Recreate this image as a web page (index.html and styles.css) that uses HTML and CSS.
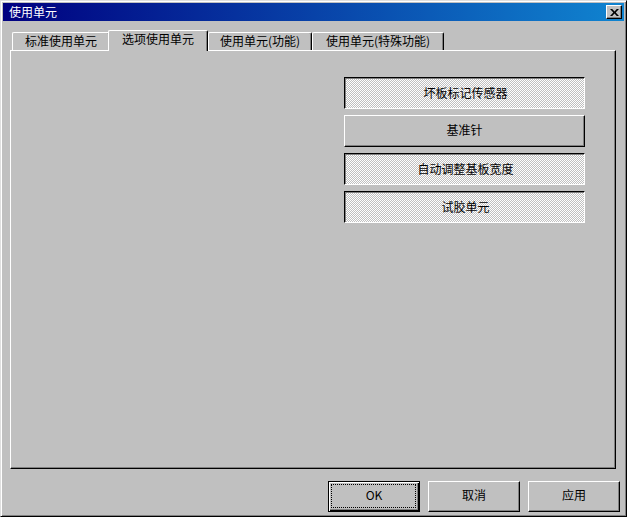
FILE: index.html
```html
<!DOCTYPE html>
<html>
<head>
<meta charset="utf-8"/>
<title>使用单元</title>
<link rel="stylesheet" href="styles.css">
</head>
<body>
<div class="window">
	<div class="titlebar">
		<span class="title">使用单元</span>
		<button class="close-btn" type="button">
			<svg width="9" height="7" viewBox="0 0 9 7"><path d="M0 0h2.2l2.3 2.4 2.3-2.4h2.2l-3.3 3.5 3.3 3.5h-2.2l-2.3-2.4-2.3 2.4h-2.2l3.3-3.5z" fill="#000"/></svg>
		</button>
	</div>
	<div class="tabs">
		<div class="tab tab-std">标准使用单元</div>
		<div class="tab tab-opt is-active">选项使用单元</div>
		<div class="tab tab-func">使用单元(功能)</div>
		<div class="tab tab-special">使用单元(特殊功能)</div>
	</div>
	<div class="panel">
		<div class="option-list">
			<button class="opt is-on" type="button">坏板标记传感器</button>
			<button class="opt" type="button">基准针</button>
			<button class="opt is-on" type="button">自动调整基板宽度</button>
			<button class="opt is-on" type="button">试胶单元</button>
		</div>
	</div>
	<div class="actions">
		<button class="btn btn-default" type="button">OK</button>
		<button class="btn" type="button">取消</button>
		<button class="btn" type="button">应用</button>
	</div>
</div>
</body>
</html>
```

FILE: styles.css
```css
body {
	margin: 0;
	background-color: #c0c0c0;
	font-family: "Noto Sans CJK SC", sans-serif;
	font-size: 12px;
	line-height: 14px;
}
button {
	font: inherit;
	color: #000;
	margin: 0;
	padding: 0;
}
.window {
	width: 627px;
	height: 517px;
	box-sizing: border-box;
	padding: 2px;
	border: 1px solid;
	border-color: #dfdfdf #000 #000 #dfdfdf;
	box-shadow: inset 1px 1px #fff, inset -1px -1px #808080;
	background-color: #c0c0c0;
	display: flex;
	flex-direction: column;
}
.titlebar {
	height: 18px;
	display: flex;
	align-items: center;
	justify-content: space-between;
	background: linear-gradient(to right, #000080, #1084d0);
	color: #fff;
	padding: 0 2px 0 6px;
}
.close-btn {
	width: 16px;
	height: 14px;
	box-sizing: border-box;
	border: 1px solid;
	border-color: #fff #000 #000 #fff;
	box-shadow: inset -1px -1px #808080;
	background-color: #c0c0c0;
	display: flex;
	align-items: center;
	justify-content: center;
}
.tabs {
	display: flex;
	align-items: flex-end;
	height: 20px;
	margin-top: 9px;
	padding-left: 9px;
}
.tab {
	height: 18px;
	box-sizing: border-box;
	border: 1px solid #fff;
	border-right-color: #000;
	border-bottom: none;
	border-radius: 2px 2px 0 0;
	box-shadow: inset -1px 0 #808080;
	text-align: center;
	line-height: 16px;
	color: #000;
	background-color: #c0c0c0;
}
.tab-std { width: 98px; }
.tab-opt { width: 100px; }
.tab-func { width: 104px; }
.tab-special { width: 132px; }
.tab.is-active {
	height: 21px;
	margin-left: -2px;
	margin-bottom: -1px;
	line-height: 15px;
	position: relative;
	z-index: 1;
}
.panel {
	height: 419px;
	box-sizing: border-box;
	margin: 0 8px 0 7px;
	border: 1px solid;
	border-color: #fff #000 #000 #fff;
	box-shadow: inset -1px -1px #808080;
	padding: 26px 30px 0 0;
}
.option-list {
	display: flex;
	flex-direction: column;
	align-items: flex-end;
	gap: 6px;
}
.opt {
	width: 241px;
	height: 32px;
	box-sizing: border-box;
	border: 1px solid;
	border-color: #fff #000 #000 #fff;
	box-shadow: inset -1px -1px #808080;
	background-color: #c0c0c0;
	padding-bottom: 2px;
}
.opt.is-on {
	border-color: #000 #fff #fff #000;
	box-shadow: inset 1px 1px #808080;
	background: repeating-conic-gradient(#fff 0 25%, #c0c0c0 0 50%) 0 0 / 2px 2px;
	padding: 0 0 1px 2px;
}
.actions {
	display: flex;
	justify-content: flex-end;
	gap: 8px;
	margin-top: 12px;
	padding-right: 4px;
}
.btn {
	width: 92px;
	height: 31px;
	box-sizing: border-box;
	border: 1px solid;
	border-color: #fff #000 #000 #fff;
	box-shadow: inset -1px -1px #808080;
	background-color: #c0c0c0;
	padding-bottom: 3px;
}
.btn-default {
	position: relative;
	border-color: #000;
	box-shadow: inset 1px 1px #fff, inset -1px -1px #000, inset -2px -2px #808080;
}
.btn-default::after {
	content: "";
	position: absolute;
	top: 2px;
	left: 2px;
	right: 3px;
	bottom: 3px;
	border: 1px dotted #000;
}
```
